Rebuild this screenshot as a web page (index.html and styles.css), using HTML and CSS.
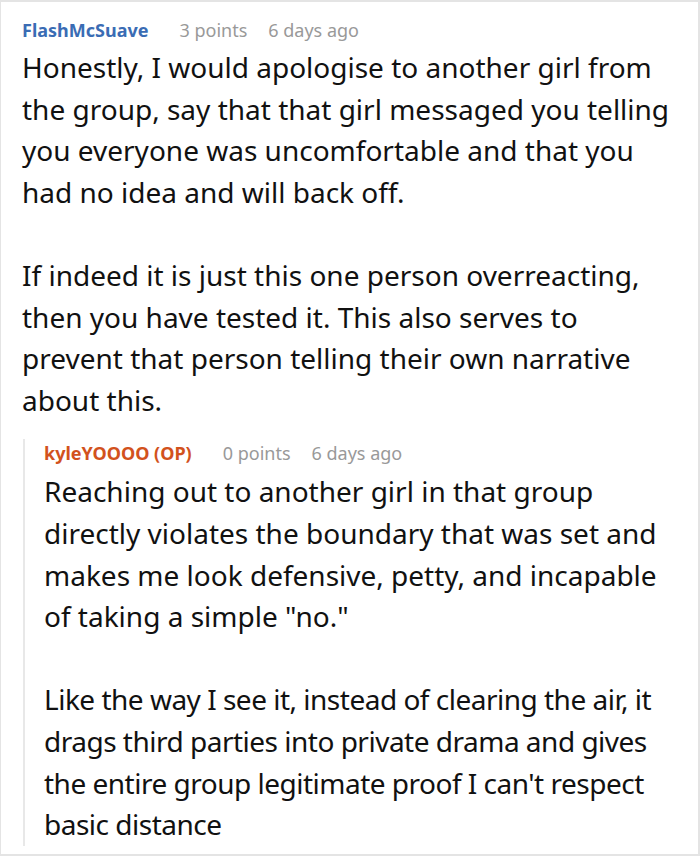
FILE: index.html
```html
<!DOCTYPE html>
<html>
<head>
<meta charset="utf-8">
<link rel="stylesheet" href="styles.css">
</head>
<body>
<div class="frame">
  <div class="comment">
    <div class="meta">
      <span class="author">FlashMcSuave</span>
      <span class="points">3 points</span>
      <span class="time">6 days ago</span>
    </div>
    <div class="body">
      <p>Honestly, I would apologise to another girl from the group, say that that girl messaged you telling you everyone was uncomfortable and that you had no idea and will back off.</p>
      <p>If indeed it is just this one person overreacting, then you have tested it. This also serves to prevent that person telling their own narrative about this.</p>
    </div>
    <div class="reply">
      <div class="meta">
        <span class="author op">kyleYOOOO (OP)</span>
        <span class="points">0 points</span>
        <span class="time">6 days ago</span>
      </div>
      <div class="body reply-body">
        <p>Reaching out to another girl in that group directly violates the boundary that was set and makes me look defensive, petty, and incapable of taking a simple "no."</p>
        <p class="tight">Like the way I see it, instead of clearing the air, it drags third parties into private drama and gives the entire group legitimate proof I can't respect basic distance</p>
      </div>
    </div>
  </div>
</div>
</body>
</html>
```
FILE: styles.css
```css
html, body {
  margin: 0;
  padding: 0;
  background: #ffffff;
}
.frame {
  width: 700px;
  height: 856px;
  box-sizing: border-box;
  border: 2px solid #e4e4e4;
  border-left-width: 1px;
  overflow: hidden;
  font-family: "Noto Sans", sans-serif;
  color: #111111;
}
.comment {
  padding: 16px 20px 0 21px;
}
.meta {
  font-size: 18px;
  line-height: 24px;
  display: flex;
}
.author {
  font-weight: 700;
  color: #3a6cb4;
  margin-right: 31px;
}
.author.op {
  color: #d2521d;
}
.points, .time {
  color: #999999;
}
.points {
  margin-right: 21px;
}
.body {
  font-size: 28px;
  line-height: 41.6px;
  margin-top: 5px;
}
.reply-body {
  margin-top: 6px;
}
.body p {
  margin: 0 0 41.6px 0;
}
.body p:last-child {
  margin-bottom: 0;
}
.body p.tight {
  letter-spacing: -0.5px;
}
.reply {
  margin-top: 18px;
  margin-left: 1px;
  border-left: 2px solid #e8e8e8;
  padding-left: 19px;
  padding-top: 2px;
}
```
